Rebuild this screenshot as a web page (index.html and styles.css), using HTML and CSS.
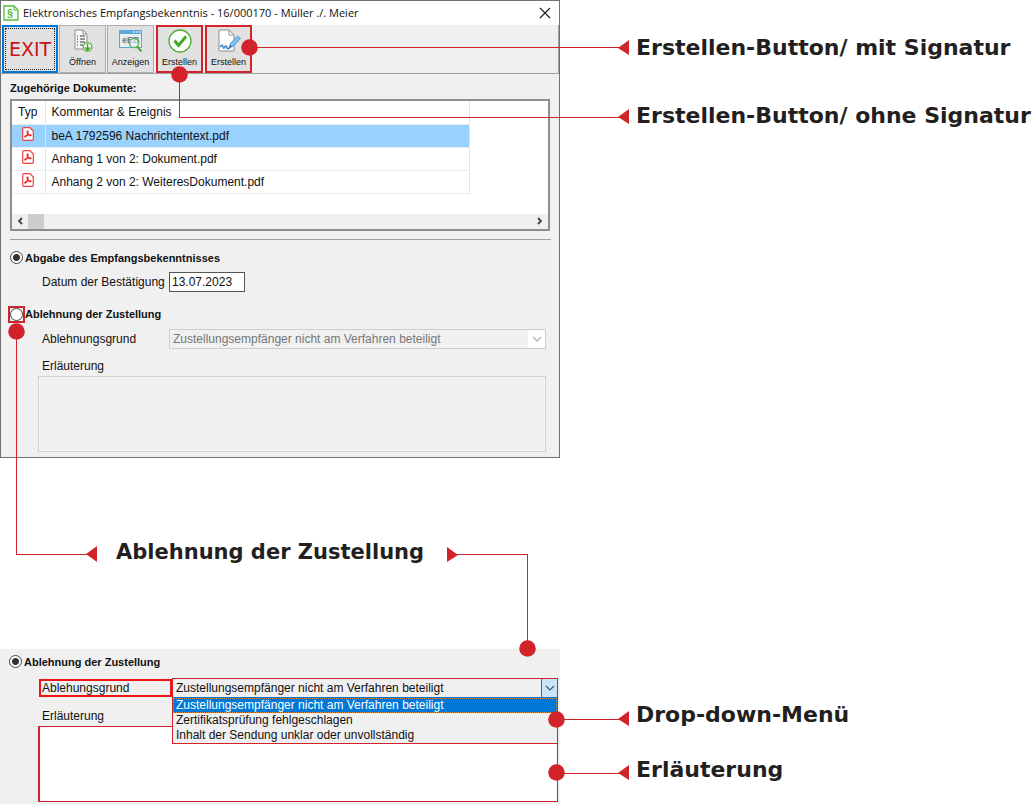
FILE: index.html
```html
<!DOCTYPE html>
<html lang="de">
<head>
    <meta charset="UTF-8">
    <meta name="viewport" content="width=device-width, initial-scale=1.0">
    <title>Elektronisches Empfangsbekenntnis</title>
    <link rel="stylesheet" href="styles.css">
</head>
<body>

<main class="manual">

    <section class="part">
        <div class="dialog">
            <header class="titlebar">
                <svg class="app-icon" width="16" height="16" viewBox="0 0 16 16">
                    <path d="M1 1h10l4 4v10H1z" fill="#fff" stroke="#55bb33" stroke-width="1.3"/>
                    <path d="M11 1v4h4" fill="none" stroke="#55bb33"/>
                    <text class="paragraph-sign" x="7" y="12" text-anchor="middle">§</text>
                </svg>
                <h1>Elektronisches Empfangsbekenntnis - 16/000170 - Müller ./. Meier</h1>
                <button class="close" type="button" aria-label="Schließen">
                    <svg width="12" height="12" viewBox="0 0 12 12"><path d="M1 1l10 10M11 1L1 11" stroke="#222" stroke-width="1.2"/></svg>
                </button>
            </header>

            <div class="toolbar">
                <button class="tool exit" type="button">EXIT</button>
                <button class="tool" type="button">
                    <svg width="22" height="25" viewBox="0 0 22 25">
                        <path d="M3 1h8l4 4v15H3z" fill="#f7f7f7" stroke="#8f8f8f"/>
                        <path d="M11 1v4h4" fill="none" stroke="#8f8f8f"/>
                        <path d="M5 7h1M5 10h1M5 13h1M5 16h1M8 7h5M8 10h5M8 13h5M8 16h3" stroke="#777" stroke-width="1.4"/>
                        <circle cx="15.5" cy="18" r="4.3" fill="#fff" stroke="#63b944" stroke-width="1.4"/>
                        <path d="M15.5 15v5.5M13 18.500l2.5 2.5 2.5-2.5" fill="none" stroke="#43a02a" stroke-width="1.6"/>
                    </svg>
                    <span>Öffnen</span>
                </button>
                <button class="tool" type="button">
                    <svg width="26" height="25" viewBox="0 0 26 25">
                        <rect x="1.5" y="1.5" width="22" height="17" fill="#e9eef2" stroke="#5ba8dc"/>
                        <path d="M1 1h23v4H1z" fill="#5ba8dc"/>
                        <path d="M15 3h2M18 3h2M21 3h2" stroke="#fff"/>
                        <text class="eeb-text" x="4" y="14">eEB</text>
                        <circle cx="16" cy="14" r="4.6" fill="#e4f1f8" fill-opacity=".6" stroke="#55b548" stroke-width="1.4"/>
                        <path d="M19.3 17.5l4 5" stroke="#43a02a" stroke-width="2"/>
                    </svg>
                    <span>Anzeigen</span>
                </button>
                <button class="tool marked" type="button">
                    <svg width="24" height="25" viewBox="0 0 24 25">
                        <circle cx="12" cy="12" r="11" fill="#fff" stroke="#4fae35" stroke-width="1.3"/>
                        <path d="M6.5 11.5l4 5L18 7.5" fill="none" stroke="#43a822" stroke-width="3"/>
                    </svg>
                    <span>Erstellen</span>
                </button>
                <button class="tool marked" type="button">
                    <svg width="24" height="25" viewBox="0 0 24 25">
                        <path d="M2 1h10l5 5v16H2z" fill="#fff" stroke="#8f8f8f"/>
                        <path d="M12 1v5h5" fill="none" stroke="#8f8f8f"/>
                        <path d="M3 18c2-3 3-2 3 0s2 1 2-.5 2 0 2 1.5 2 .5 3-.5" fill="none" stroke="#2b7cc4" stroke-width="1.3"/>
                        <path d="M12 19l1.5-4.5 7-7.500 3 2.5-7 7.5z" fill="#7fbdec" stroke="#3d8ccf" stroke-width=".8"/>
                        <path d="M12 19l1-3 1.8 1.800z" fill="#2b6ca8"/>
                    </svg>
                    <span>Erstellen</span>
                </button>
            </div>

            <h2 class="list-title">Zugehörige Dokumente:</h2>

            <div class="list">
                <table class="documents">
                    <thead>
                        <tr><th class="type">Typ</th><th>Kommentar &amp; Ereignis</th></tr>
                    </thead>
                    <tbody>
                        <tr class="selected">
                            <td class="type"><svg class="pdf" viewBox="0 0 12 14"><use href="#pdf"/></svg></td>
                            <td>beA 1792596 Nachrichtentext.pdf</td>
                        </tr>
                        <tr>
                            <td class="type"><svg class="pdf" viewBox="0 0 12 14"><use href="#pdf"/></svg></td>
                            <td>Anhang 1 von 2: Dokument.pdf</td>
                        </tr>
                        <tr>
                            <td class="type"><svg class="pdf" viewBox="0 0 12 14"><use href="#pdf"/></svg></td>
                            <td>Anhang 2 von 2: WeiteresDokument.pdf</td>
                        </tr>
                    </tbody>
                </table>
                <div class="scrollbar">
                    <button type="button" aria-label="Nach links">
                        <svg width="6" height="8" viewBox="0 0 6 8"><path d="M5 1L2 4l3 3" fill="none" stroke="#444" stroke-width="1.8"/></svg>
                    </button>
                    <div class="thumb"></div>
                    <button type="button" aria-label="Nach rechts">
                        <svg width="6" height="8" viewBox="0 0 6 8"><path d="M1 1l3 3-3 3" fill="none" stroke="#444" stroke-width="1.8"/></svg>
                    </button>
                </div>
            </div>

            <form class="answer">
                <label class="choice"><input type="radio" name="answer" checked><span>Abgabe des Empfangsbekenntnisses</span></label>
                <div class="field date-field">
                    <label for="date">Datum der Bestätigung</label>
                    <input class="date" id="date" type="text" value="13.07.2023">
                </div>
                <label class="choice"><span class="radio-mark"><input type="radio" name="answer"></span><span>Ablehnung der Zustellung</span></label>
                <div class="field">
                    <label for="reason">Ablehnungsgrund</label>
                    <div class="combo disabled">
                        <select id="reason" disabled>
                            <option>Zustellungsempfänger nicht am Verfahren beteiligt</option>
                        </select>
                        <span class="arrow"><svg width="10" height="6" viewBox="0 0 10 6"><path d="M1 1l4 4 4-4" fill="none" stroke="#b5b5b5" stroke-width="1.3"/></svg></span>
                    </div>
                </div>
                <label class="note-label" for="note">Erläuterung</label>
                <textarea class="note" id="note" disabled></textarea>
            </form>
        </div>

        <div class="callouts">
            <p>Erstellen-Button/ mit Signatur</p>
            <p>Erstellen-Button/ ohne Signatur</p>
        </div>
    </section>

    <h2 class="detail-title">Ablehnung der Zustellung</h2>

    <section class="part detail">
        <form class="panel">
            <label class="choice"><input type="radio" name="refusal" checked><span>Ablehnung der Zustellung</span></label>
            <div class="field">
                <label class="framed" for="reason-open">Ablehungsgrund</label>
                <div class="combo open">
                    <select id="reason-open">
                        <option>Zustellungsempfänger nicht am Verfahren beteiligt</option>
                        <option>Zertifikatsprüfung fehlgeschlagen</option>
                        <option>Inhalt der Sendung unklar oder unvollständig</option>
                    </select>
                    <span class="arrow"><svg width="10" height="6" viewBox="0 0 10 6"><path d="M1 1l4 4 4-4" fill="none" stroke="#456" stroke-width="1.2"/></svg></span>
                    <ul class="menu">
                        <li class="active">Zustellungsempfänger nicht am Verfahren beteiligt</li>
                        <li>Zertifikatsprüfung fehlgeschlagen</li>
                        <li>Inhalt der Sendung unklar oder unvollständig</li>
                    </ul>
                </div>
            </div>
            <label class="note-label" for="note-open">Erläuterung</label>
            <textarea class="note" id="note-open"></textarea>
        </form>

        <div class="callouts">
            <p>Drop-down-Menü</p>
            <p>Erläuterung</p>
        </div>
    </section>

    <!-- Leader lines between the controls and their captions -->
    <svg class="leaders" width="640" height="805" viewBox="0 0 640 805">
        <g class="lines">
            <path d="M250 47.500H620"/>
            <path d="M179.500 75V117.500H620"/>
            <path d="M16.500 331V554.500H88"/>
            <path d="M456 554.500H527.500V648"/>
            <path d="M557 719.500H620"/>
            <path d="M557 773.500H620"/>
        </g>
        <g class="ends">
            <circle cx="249.500" cy="47.500" r="8.3"/>
            <circle cx="179.500" cy="74.500" r="8.3"/>
            <circle cx="16.500" cy="331.500" r="8.3"/>
            <circle cx="527.500" cy="648.500" r="8.3"/>
            <circle cx="556.500" cy="719.500" r="8.3"/>
            <circle cx="556.500" cy="772.500" r="8.3"/>
            <path d="M618 48l11-8v15z"/>
            <path d="M618 117l11-8v15z"/>
            <path d="M86 554l11-8v16z"/>
            <path d="M458 555l-11-8v15z"/>
            <path d="M618 719l11-8v15z"/>
            <path d="M618 773l11-8v15z"/>
        </g>
    </svg>
</main>

<svg class="symbols" width="0" height="0">
    <symbol id="pdf" viewBox="0 0 12 14">
        <path d="M2 .7h6l3.300 3.300v8q0 1.300-1.300 1.300H2Q.7 13.300.7 12V2Q.7.7 2 .7z" fill="#fff" stroke="#f04040" stroke-width="1.200"/>
        <path d="M5.500 4c1 0 .5 2-.2 3.500S3.500 10.500 2.900 10s1-1.500 3-2 3.300-.2 3.200.5-1.800 0-2.800-1.200S4.500 4 5.500 4z" fill="none" stroke="#f01818" stroke-width="1.100"/>
    </symbol>
</svg>

</body>
</html>
```

FILE: styles.css
```css
* {
    box-sizing: border-box;
}

body {
    margin: 0;
    background-color: white;
    color: #111;
    font-family: "Liberation Sans", Arial, sans-serif;
    font-size: 12px;
    line-height: 16px;
}

h1, h2, p, ul {
    margin: 0;
    padding: 0;
}

button, input, select, textarea {
    font: inherit;
    color: inherit;
    margin: 0;
}

.manual {
    position: relative;
}

.part {
    display: grid;
    grid-template-columns: minmax(0, 560px) 1fr;
    align-items: start;
}

/* Dialog window */
.dialog {
    background-color: #f0f0f0;
    border: 1px solid #6f7175;
    padding-bottom: 5px;
}

.titlebar {
    display: flex;
    align-items: center;
    gap: 4px;
    height: 24px;
    padding: 0 8px 0 2px;
    background-color: white;
}

.titlebar h1 {
    flex: 1;
    font-family: "Open Sans", "Noto Sans", sans-serif;
    font-size: 11px;
    font-weight: normal;
}

.paragraph-sign {
    font-size: 11px;
    font-weight: bold;
    fill: #55bb33;
}

.close {
    display: flex;
    padding: 0;
    border: none;
    background: none;
}

.toolbar {
    display: flex;
    gap: 1px;
    padding: 0 1px;
    border-right: 1px solid #a0a0a0;
    border-bottom: 1px solid #a0a0a0;
}

.tool {
    display: flex;
    flex-direction: column;
    align-items: center;
    justify-content: space-between;
    width: 47px;
    height: 48px;
    padding: 3px 0 4px;
    border: 1px solid #adadad;
    background-color: #e1e1e1;
    font-size: 9px;
    line-height: 12px;
}

.tool.exit {
    justify-content: center;
    width: 56px;
    padding: 0;
    border: 2px solid #0078d7;
    outline: 1px dotted #222;
    outline-offset: -4px;
    color: #c81414;
    font-family: "DejaVu Sans", Verdana, sans-serif;
    font-size: 19px;
}

.tool.marked {
    margin-left: 1px;
    padding: 2px 0 3px;
    border: 2px solid #d2232a;
}

.eeb-text {
    font-size: 9px;
    font-weight: bold;
    fill: #777;
}

.list-title {
    margin: 6px 9px 3px;
    font-size: 11px;
}

.list {
    margin: 0 9px;
    border: 2px solid #8c8e90;
    background-color: white;
}

.documents {
    width: calc(100% - 78px);
    margin-bottom: 20px;
    border-collapse: collapse;
    table-layout: fixed;
}

.documents th, .documents td {
    height: 23px;
    padding: 0 6px;
    border-right: 1px solid #e3e3e3;
    border-bottom: 1px solid #ececec;
    font-weight: normal;
    text-align: left;
}

.documents .type {
    width: 33px;
}

.documents td.type {
    padding: 2px 0 0 10px;
    vertical-align: top;
}

.selected {
    background-color: #99d1ff;
}

.pdf {
    display: block;
    width: 12px;
    height: 14px;
}

.scrollbar {
    display: flex;
    height: 15px;
    background-color: #f0f0f0;
}

.scrollbar button {
    width: 16px;
    padding: 0;
    border: none;
    background: none;
    line-height: 8px;
}

.thumb {
    width: 16px;
    margin-right: auto;
    background-color: #cdcdcd;
}

/* Form */
.answer {
    margin: 8px 8px 0 9px;
    padding-top: 10px;
    border-top: 1px solid #a0a0a0;
}

.choice {
    display: flex;
    align-items: center;
    gap: 2px;
    width: max-content;
    font-size: 11px;
    font-weight: bold;
}

.choice input {
    appearance: none;
    width: 13px;
    height: 13px;
    border: 1px solid #444;
    border-radius: 50%;
    background-color: white;
}

.choice input:checked {
    background-image: radial-gradient(circle, #333 3px, white 4px);
}

.radio-mark {
    display: flex;
    margin: 0 -2px;
    border: 2px solid #d2232a;
}

.field {
    display: grid;
    grid-template-columns: 127px 1fr;
    align-items: center;
    margin: 6px 5px 0 32px;
}

.date-field {
    margin-bottom: 14px;
}

.date {
    width: 76px;
    height: 20px;
    padding: 0 2px;
    border: 1px solid #555;
    background-color: white;
}

.combo {
    position: relative;
    display: flex;
    height: 20px;
    border: 1px solid #cfcfcf;
    background-color: #f0f0f0;
}

.combo select {
    appearance: none;
    flex: 1;
    min-width: 0;
    padding: 0 3px;
    border: none;
    background: none;
}

.combo .arrow {
    display: flex;
    align-items: center;
    justify-content: center;
    width: 17px;
    background-color: white;
}

.disabled select {
    color: #777;
    opacity: 1;
}

.note-label {
    display: block;
    margin: 9px 0 2px 32px;
}

.note {
    display: block;
    width: calc(100% - 33px);
    height: 76px;
    margin-left: 28px;
    border: 1px solid #cfcfcf;
    background-color: #f0f0f0;
    box-shadow: inset 0 0 0 1px #f8f8f8;
    resize: none;
}

/* Captions */
.detail-title, .callouts {
    color: #231f20;
    font-family: "DejaVu Sans", Verdana, sans-serif;
    font-weight: bold;
    line-height: 24px;
}

.detail-title {
    margin: 82px 0 85px 116px;
    font-size: 21px;
}

.callouts {
    display: flex;
    flex-direction: column;
    gap: 44px;
    padding: 36px 0 0 76px;
    font-size: 22px;
    white-space: nowrap;
}

.detail .callouts {
    gap: 31px;
    padding-top: 54px;
}

/* Detail panel with the open list */
.panel {
    padding: 5px 2px 2px 9px;
    background-color: #f0f0f0;
}

.panel .field {
    grid-template-columns: 133px 1fr;
    margin: 8px 0 0 30px;
}

.framed {
    height: 18px;
    padding-left: 1px;
    border: 2px solid #f01414;
    line-height: 14px;
}

.open {
    border-color: #d2232a;
}

.open .arrow {
    width: 16px;
    border-left: 1px solid #0078d7;
    background-color: #cce4f7;
}

.menu {
    position: absolute;
    top: 100%;
    left: -1px;
    right: -1px;
    border: 1px solid #d2232a;
    border-top: 1px solid #0078d7;
    background-color: #f0f0f0;
    list-style: none;
    line-height: 15px;
}

.menu li {
    padding: 0 3px;
}

.menu .active {
    outline: 1px dotted #e08a3c;
    outline-offset: -1px;
    background-color: #0078d7;
    color: white;
}

.panel .note-label {
    margin: 10px 0 2px 33px;
}

.panel .note {
    width: calc(100% - 29px);
    margin-left: 29px;
    border: 1px solid #d2232a;
    border-left-width: 2px;
    background-color: white;
}

/* Leader lines */
.leaders {
    position: absolute;
    top: 0;
    left: 0;
    pointer-events: none;
}

.lines {
    fill: none;
    stroke: #d2232a;
    stroke-width: 1px;
    shape-rendering: crispEdges;
}

.ends {
    fill: #d2232a;
}

.symbols {
    position: absolute;
}
```
